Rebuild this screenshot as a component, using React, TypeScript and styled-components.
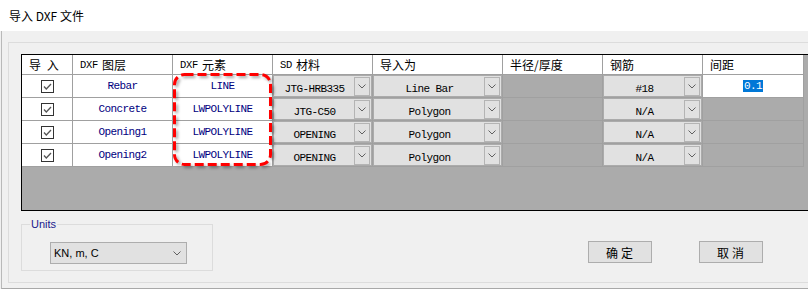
//#region Import
import React from 'react';
import styled, { createGlobalStyle } from 'styled-components';
//#endregion

// #region Styled
const GlobalStyle = createGlobalStyle`
  html, body {
    margin: 0;
    padding: 0;
    background: #f0f0f0;
  }
`;

const StyledWindow = styled.div`
  width: 808px;
  height: 289px;
  overflow: hidden;
  background: #f0f0f0;
  display: flex;
  flex-direction: column;
`;

const StyledTitleBar = styled.div`
  height: 31px;
  flex-shrink: 0;
  background: #ffffff;
  display: flex;
  align-items: center;
  padding-left: 9px;
  font-family: 'Noto Sans CJK SC', sans-serif;
  font-size: 12px;
  color: #000;
`;

const StyledClient = styled.div`
  flex: 1;
  margin-left: 1px;
  border-left: 1px solid #b9b9b9;
  border-bottom: 1px solid #a8a8a8;
  padding: 11px 0 4px 6px;
  display: flex;
  flex-direction: column;
`;

const StyledPanel = styled.div`
  width: 830px;
  border: 1px solid #dcdcdc;
  padding: 11px 0 11px 12px;
  display: flex;
  flex-direction: column;
`;

const StyledGrid = styled.div`
  position: relative;
  width: 820px;
  height: 155px;
  border: 1px solid #000;
  border-right: none;
  background: #ababab;
`;

const StyledRow = styled.div<{ $header?: boolean }>`
  display: flex;
  height: ${(p) => (p.$header ? 20 : 23)}px;
`;

const StyledCell = styled.div<{ $w: number; $kind: 'head' | 'white' | 'grey' | 'combo' }>`
  box-sizing: border-box;
  width: ${(p) => p.$w}px;
  flex-shrink: 0;
  border-right: 1px solid #a0a0a0;
  border-bottom: 1px solid #a0a0a0;
  background: ${(p) =>
    p.$kind === 'head' || p.$kind === 'white' ? '#ffffff' : '#ababab'};
  display: flex;
  align-items: center;
  justify-content: ${(p) => (p.$kind === 'head' ? 'flex-start' : 'center')};
  padding: ${(p) =>
    p.$kind === 'head' ? '0 0 0 7px' : p.$kind === 'combo' ? '1px' : '0'};
  font-family: 'Noto Sans CJK SC', sans-serif;
  font-size: 12px;
  word-spacing: 3px;
  color: #000;
`;

const StyledMono = styled.span<{ $navy?: boolean }>`
  font-family: 'Liberation Mono', monospace;
  font-size: 11px;
  letter-spacing: -0.6px;
  word-spacing: 0;
  color: ${(p) => (p.$navy ? '#000080' : '#000')};
`;

const StyledHeadLatin = styled.span`
  font-family: 'Liberation Mono', monospace;
  font-size: 10.5px;
  letter-spacing: -0.3px;
  margin-right: 4px;
`;

const StyledCombo = styled.div`
  flex: 1;
  align-self: stretch;
  display: flex;
  align-items: center;
  background: #e1e1e1;
  padding: 1px;
`;

const StyledComboText = styled.div`
  flex: 1;
  text-align: center;
`;

const StyledComboButton = styled.div`
  box-sizing: border-box;
  width: 16px;
  height: 19px;
  border: 1px solid #b4b4b4;
  display: flex;
  align-items: center;
  justify-content: center;
`;

const StyledSelection = styled.span`
  background: #0078d7;
  color: #fff;
  line-height: 12px;
  padding: 0 1px;
`;

const StyledHighlight = styled.svg`
  position: absolute;
  left: 151px;
  top: 18px;
  filter: drop-shadow(2px 2px 1.5px rgba(0, 0, 0, 0.35));
`;

const StyledFooter = styled.div`
  display: flex;
  align-items: flex-start;
`;

const StyledFieldset = styled.fieldset`
  box-sizing: border-box;
  width: 192px;
  margin: 6px 0 0 0;
  padding: 0 0 6px 8px;
  border: 1px solid #dcdcdc;
  min-width: 0;
`;

const StyledLegend = styled.legend`
  padding: 0 1px;
  font-family: 'Liberation Sans', sans-serif;
  font-size: 11px;
  line-height: 14px;
  color: #1a1a8c;
`;

const StyledSelect = styled.div`
  box-sizing: border-box;
  width: 137px;
  height: 22px;
  margin: 11px 0 0 20px;
  background: #e1e1e1;
  border: 1px solid #adadad;
  display: flex;
  align-items: center;
  justify-content: space-between;
  padding: 0 5px 0 3px;
  font-family: 'Liberation Sans', sans-serif;
  font-size: 11px;
  color: #000;
`;

const StyledButton = styled.button<{ $gap: number }>`
  box-sizing: border-box;
  width: 64px;
  height: 22px;
  margin: 30px 0 0 ${(p) => p.$gap}px;
  padding: 0 0 0 2px;
  background: #e1e1e1;
  border: 1px solid #adadad;
  font-family: 'Noto Sans CJK SC', sans-serif;
  font-size: 12px;
  letter-spacing: 3px;
  color: #000;
`;
// #endregion

const widths = [51, 100, 100, 100, 130, 100, 100, 101];

type RowType = {
  layer: string;
  element: string;
  material: string;
  importAs: string;
  rebar: string;
  spacing?: string;
};

const rows: RowType[] = [
  { layer: 'Rebar', element: 'LINE', material: 'JTG-HRB335', importAs: 'Line Bar', rebar: '#18', spacing: '0.1' },
  { layer: 'Concrete', element: 'LWPOLYLINE', material: 'JTG-C50', importAs: 'Polygon', rebar: 'N/A' },
  { layer: 'Opening1', element: 'LWPOLYLINE', material: 'OPENING', importAs: 'Polygon', rebar: 'N/A' },
  { layer: 'Opening2', element: 'LWPOLYLINE', material: 'OPENING', importAs: 'Polygon', rebar: 'N/A' },
];

const Chevron = () => (
  <svg width="8" height="5" viewBox="0 0 8 5">
    <polyline points="0.5,0.5 4,4 7.5,0.5" fill="none" stroke="#606060" strokeWidth="1" />
  </svg>
);

const CheckBox = () => (
  <svg width="13" height="13" viewBox="0 0 13 13">
    <rect x="0.5" y="0.5" width="12" height="12" fill="#fff" stroke="#333" />
    <polyline points="3,6.5 5.3,9 10,4" fill="none" stroke="#555" strokeWidth="1.3" />
  </svg>
);

const Combo = ({ text }: { text: string }) => (
  <StyledCombo>
    <StyledComboText>
      <StyledMono>{text}</StyledMono>
    </StyledComboText>
    <StyledComboButton>
      <Chevron />
    </StyledComboButton>
  </StyledCombo>
);

export default function App() {
  return (
    <StyledWindow>
      <GlobalStyle />
      <StyledTitleBar>导入 DXF 文件</StyledTitleBar>
      <StyledClient>
        <StyledPanel>
          <StyledGrid>
            <StyledRow $header>
              <StyledCell $w={widths[0]} $kind="head">导 入</StyledCell>
              <StyledCell $w={widths[1]} $kind="head">
                <StyledHeadLatin>DXF</StyledHeadLatin>图层
              </StyledCell>
              <StyledCell $w={widths[2]} $kind="head">
                <StyledHeadLatin>DXF</StyledHeadLatin>元素
              </StyledCell>
              <StyledCell $w={widths[3]} $kind="head">
                <StyledHeadLatin>SD</StyledHeadLatin>材料
              </StyledCell>
              <StyledCell $w={widths[4]} $kind="head">导入为</StyledCell>
              <StyledCell $w={widths[5]} $kind="head">半径/厚度</StyledCell>
              <StyledCell $w={widths[6]} $kind="head">钢筋</StyledCell>
              <StyledCell $w={widths[7]} $kind="head">间距</StyledCell>
            </StyledRow>
            {rows.map((row) => (
              <StyledRow key={row.layer}>
                <StyledCell $w={widths[0]} $kind="white">
                  <CheckBox />
                </StyledCell>
                <StyledCell $w={widths[1]} $kind="white">
                  <StyledMono $navy>{row.layer}</StyledMono>
                </StyledCell>
                <StyledCell $w={widths[2]} $kind="white">
                  <StyledMono $navy>{row.element}</StyledMono>
                </StyledCell>
                <StyledCell $w={widths[3]} $kind="combo">
                  <Combo text={row.material} />
                </StyledCell>
                <StyledCell $w={widths[4]} $kind="combo">
                  <Combo text={row.importAs} />
                </StyledCell>
                <StyledCell $w={widths[5]} $kind="grey" />
                <StyledCell $w={widths[6]} $kind="combo">
                  <Combo text={row.rebar} />
                </StyledCell>
                <StyledCell $w={widths[7]} $kind={row.spacing ? 'white' : 'grey'}>
                  {row.spacing && (
                    <StyledMono>
                      <StyledSelection>{row.spacing}</StyledSelection>
                    </StyledMono>
                  )}
                </StyledCell>
              </StyledRow>
            ))}
            <StyledHighlight width="99" height="93" viewBox="0 0 99 93">
              <rect
                x="1.5"
                y="1.5"
                width="96"
                height="90"
                rx="10"
                fill="none"
                stroke="#ff0000"
                strokeWidth="3"
                strokeDasharray="9 4"
              />
            </StyledHighlight>
          </StyledGrid>
          <StyledFooter>
            <StyledFieldset>
              <StyledLegend>Units</StyledLegend>
              <StyledSelect>
                <span>KN, m, C</span>
                <Chevron />
              </StyledSelect>
            </StyledFieldset>
            <StyledButton $gap={375}>确定</StyledButton>
            <StyledButton $gap={47}>取消</StyledButton>
          </StyledFooter>
        </StyledPanel>
      </StyledClient>
    </StyledWindow>
  );
}
